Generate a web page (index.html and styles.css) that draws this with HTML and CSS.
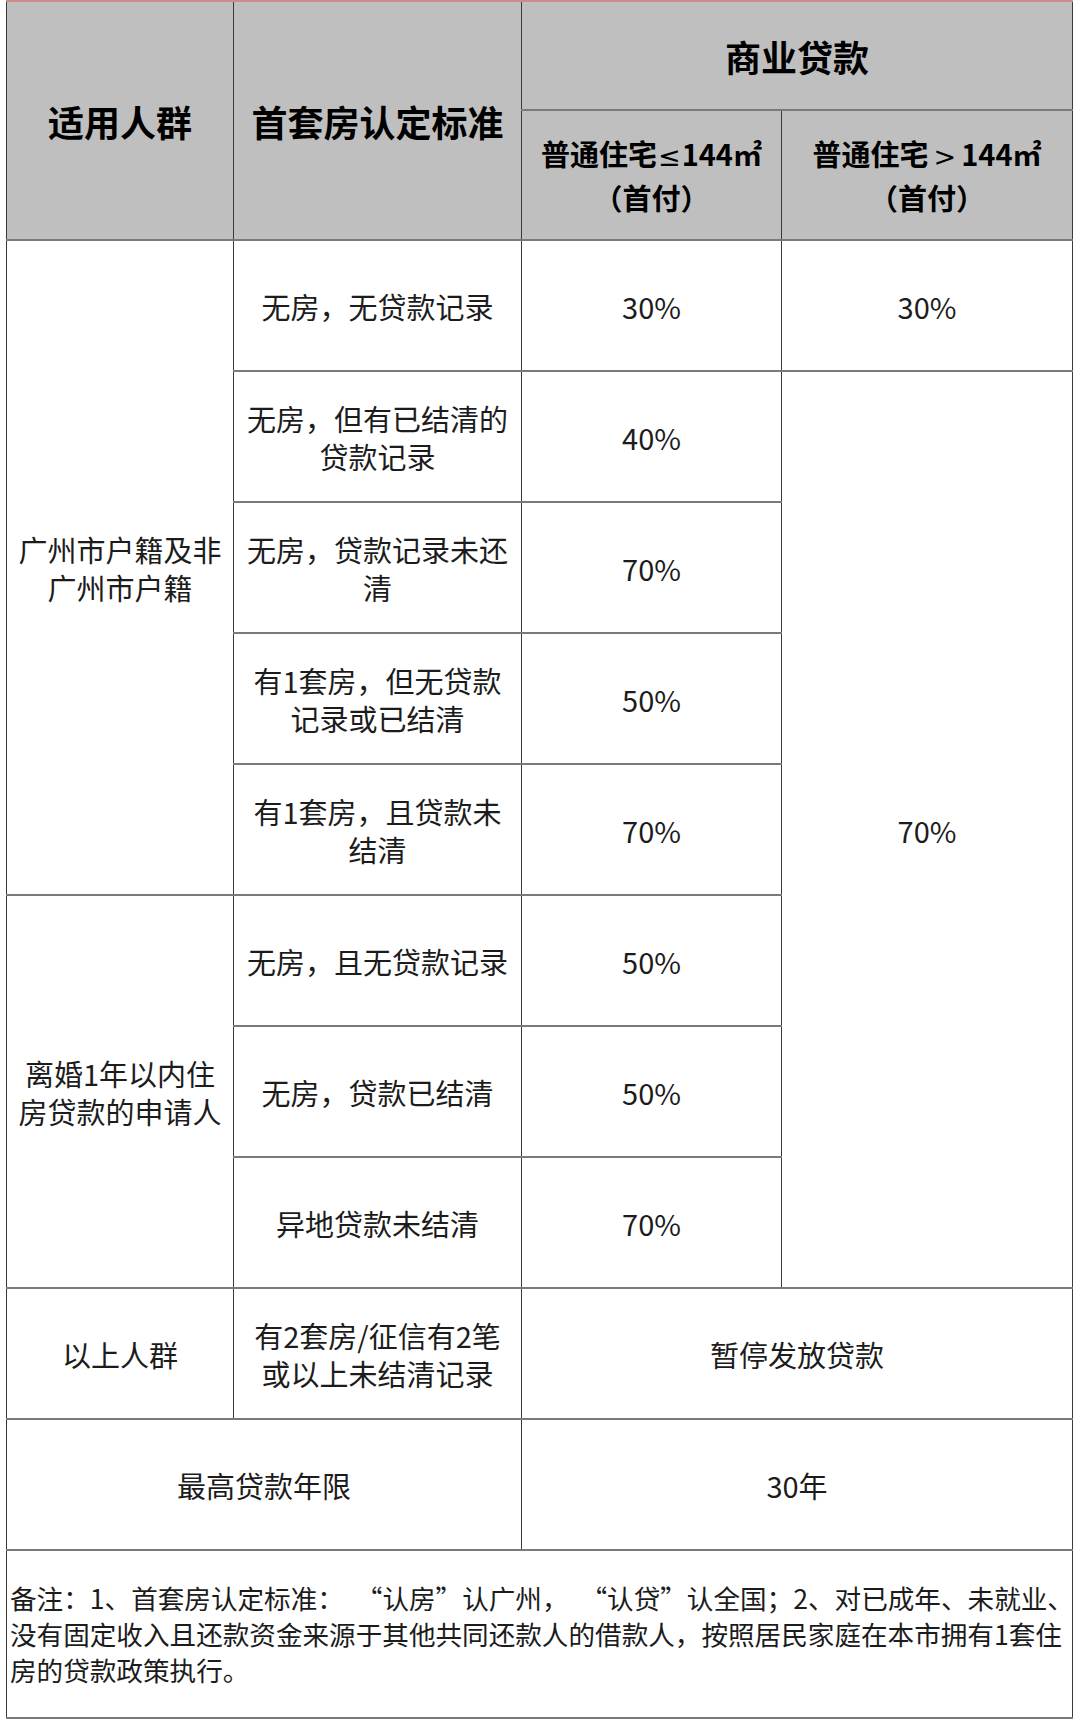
FILE: index.html
```html
<!DOCTYPE html>
<html lang="zh-CN">
<head>
<meta charset="utf-8">
<title>广州房贷政策</title>
<link rel="stylesheet" href="styles.css">
</head>
<body>
<div class="page">
<table class="policy">
  <colgroup>
    <col class="c1"><col class="c2"><col class="c3"><col class="c4">
  </colgroup>
  <thead>
    <tr class="h1">
      <th rowspan="2" class="big">适用人群</th>
      <th rowspan="2" class="big">首套房认定标准</th>
      <th colspan="2" class="big">商业贷款</th>
    </tr>
    <tr class="h2">
      <th class="sub">普通住宅<span class="sym">≤</span>144㎡<br>（首付）</th>
      <th class="sub">普通住宅<span class="sym gt">&gt;</span>144㎡<br>（首付）</th>
    </tr>
  </thead>
  <tbody>
    <tr class="r">
      <td rowspan="5">广州市户籍及非广州市户籍</td>
      <td>无房，无贷款记录</td>
      <td>30%</td>
      <td>30%</td>
    </tr>
    <tr class="r">
      <td>无房，但有已结清的贷款记录</td>
      <td>40%</td>
      <td rowspan="7">70%</td>
    </tr>
    <tr class="r">
      <td>无房，贷款记录未还清</td>
      <td>70%</td>
    </tr>
    <tr class="r">
      <td>有1套房，但无贷款记录或已结清</td>
      <td>50%</td>
    </tr>
    <tr class="r">
      <td>有1套房，且贷款未结清</td>
      <td>70%</td>
    </tr>
    <tr class="r">
      <td rowspan="3">离婚1年以内住房贷款的申请人</td>
      <td>无房，且无贷款记录</td>
      <td>50%</td>
    </tr>
    <tr class="r">
      <td>无房，贷款已结清</td>
      <td>50%</td>
    </tr>
    <tr class="r">
      <td>异地贷款未结清</td>
      <td>70%</td>
    </tr>
    <tr class="r">
      <td>以上人群</td>
      <td>有2套房/征信有2笔或以上未结清记录</td>
      <td colspan="2">暂停发放贷款</td>
    </tr>
    <tr class="r">
      <td colspan="2">最高贷款年限</td>
      <td colspan="2">30年</td>
    </tr>
    <tr class="note-row">
      <td colspan="4" class="note">备注：1、首套房认定标准：&nbsp;&nbsp;“认房”认广州，&nbsp;&nbsp;“认贷”认全国；2、对已成年、未就业、<br>没有固定收入且还款资金来源于其他共同还款人的借款人，按照居民家庭在本市拥有1套住<br>房的贷款政策执行。</td>
    </tr>
  </tbody>
</table>
</div>
</body>
</html>
```

FILE: styles.css
```css
html, body {
  margin: 0;
  padding: 0;
  background: #ffffff;
}

body {
  font-family: "Noto Sans CJK SC", "Microsoft YaHei", sans-serif;
  color: #1c1c1c;
}

.page {
  padding: 0 9px 0 6px;
}

.policy {
  width: 1066px;
  border-collapse: collapse;
  table-layout: fixed;
  border-top: 2px solid #cf8a8a;
}

.c1 { width: 227px; }
.c2 { width: 288px; }
.c3 { width: 260px; }
.c4 { width: 291px; }

.policy th,
.policy td {
  border-left: 1.5px solid #3a3a3a;
  border-right: 1.5px solid #3a3a3a;
  border-top: 2px solid #7a7a7a;
  border-bottom: 2px solid #7a7a7a;
  text-align: center;
  vertical-align: middle;
  padding: 0 10px;
}

.policy th {
  background: #bfbfbf;
  color: #000000;
  font-weight: 700;
}

.policy thead tr:first-child th {
  border-top: none;
}

.big {
  font-size: 36px;
  line-height: 44px;
}

.sub {
  font-size: 29px;
  line-height: 41px;
}

.sym {
  font-family: "DejaVu Sans", sans-serif;
  font-weight: 400;
  font-size: 27px;
  padding: 0 1px;
}

.sym.gt {
  padding: 0 5px;
}

.h1 { height: 109px; }
.h2 { height: 130px; }

.policy td {
  font-size: 29px;
  line-height: 38px;
  font-weight: 400;
}

.r { height: 131px; }

.note-row { height: 168px; }

.policy td.note {
  text-align: left;
  font-size: 26.6px;
  line-height: 36px;
  padding: 0 3px;
  white-space: nowrap;
}
```
